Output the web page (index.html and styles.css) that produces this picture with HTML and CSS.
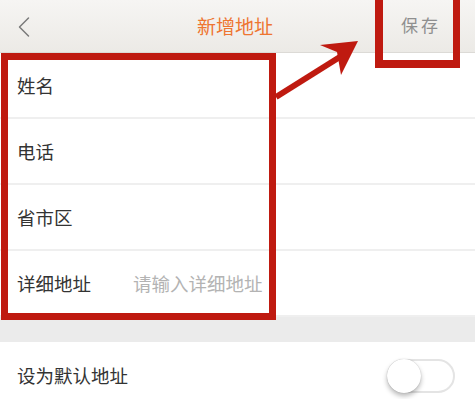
FILE: index.html
```html
<!DOCTYPE html>
<html lang="zh">
<head>
<meta charset="utf-8">
<title>新增地址</title>
<link rel="stylesheet" href="styles.css">
</head>
<body>
<div class="page">
  <header class="topbar">
    <span class="back">
      <svg width="14" height="22" viewBox="0 0 14 22"><path d="M11.5 2 L2.5 11 L11.5 20" fill="none" stroke="#7a7a7a" stroke-width="1.5" stroke-linecap="round" stroke-linejoin="round"/></svg>
    </span>
    <h1 class="title">新增地址</h1>
    <span class="save">保存</span>
  </header>
  <section class="form">
    <div class="row"><span class="label">姓名</span></div>
    <div class="row"><span class="label">电话</span></div>
    <div class="row"><span class="label">省市区</span></div>
    <div class="row"><span class="label">详细地址</span><span class="placeholder">请输入详细地址</span></div>
  </section>
  <div class="gap"></div>
  <section class="form">
    <div class="row last">
      <span class="label">设为默认地址</span>
      <span class="toggle"><span class="knob"></span></span>
    </div>
  </section>

  <div class="mark mark-form"></div>
  <div class="mark mark-save"></div>
  <svg class="arrow" width="475" height="120" viewBox="0 0 475 120">
    <line x1="276" y1="97" x2="343" y2="55" stroke="#bf1a10" stroke-width="6"/>
    <polygon points="358,41 320,45 337,52 341,75" fill="#bf1a10"/>
  </svg>
</div>
</body>
</html>
```
FILE: styles.css
```css
* { box-sizing: border-box; margin: 0; padding: 0; }
html, body { width: 475px; height: 399px; overflow: hidden; background: #fff; }
body { font-family: "Noto Sans CJK SC", "Noto Sans", sans-serif; }
.page { position: relative; width: 475px; height: 399px; overflow: hidden; }

.topbar {
  height: 53px;
  display: flex;
  align-items: center;
  justify-content: center;
  position: relative;
  background: linear-gradient(#f6f5f3, #eceae6);
  border-bottom: 1px solid #dcdad6;
}
.back { position: absolute; left: 17px; top: 16px; display: flex; }
.title { font-size: 19px; font-weight: 400; color: #ee7531; margin-top: -1px; margin-left: -5px; }
.save { position: absolute; left: 401px; top: 12px; font-size: 17px; color: #8f8f8f; letter-spacing: 3px; }

.form { background: #fff; }
.row {
  height: 66px;
  display: flex;
  align-items: center;
  padding-left: 17px;
  border-bottom: 2px solid #efefef;
}
.row.last { border-bottom: none; padding-right: 20px; justify-content: space-between; }
.label { font-size: 18.5px; color: #333; width: 116px; }
.row.last .label { width: auto; }
.placeholder { font-size: 18.5px; color: #b3b3b3; }

.gap { height: 25px; background: #ebebeb; }

.toggle {
  width: 68px; height: 34px;
  border: 2px solid #e4e4e4;
  border-radius: 17px;
  position: relative;
  margin-top: 1px;
}
.knob {
  position: absolute; left: -2px; top: -2px;
  width: 34px; height: 34px; border-radius: 50%;
  background: #fff;
  box-shadow: 0 3px 5px rgba(0,0,0,0.28), 0 0 1px rgba(0,0,0,0.25);
}

.mark { position: absolute; border: 7px solid #bf1a10; }
.mark-form { left: 1px; top: 53px; width: 275px; height: 267px; }
.mark-save { left: 375px; top: -8px; width: 85px; height: 76px; border-width: 7px 7px 8px 8px; }
.arrow { position: absolute; left: 0; top: 0; }
```
